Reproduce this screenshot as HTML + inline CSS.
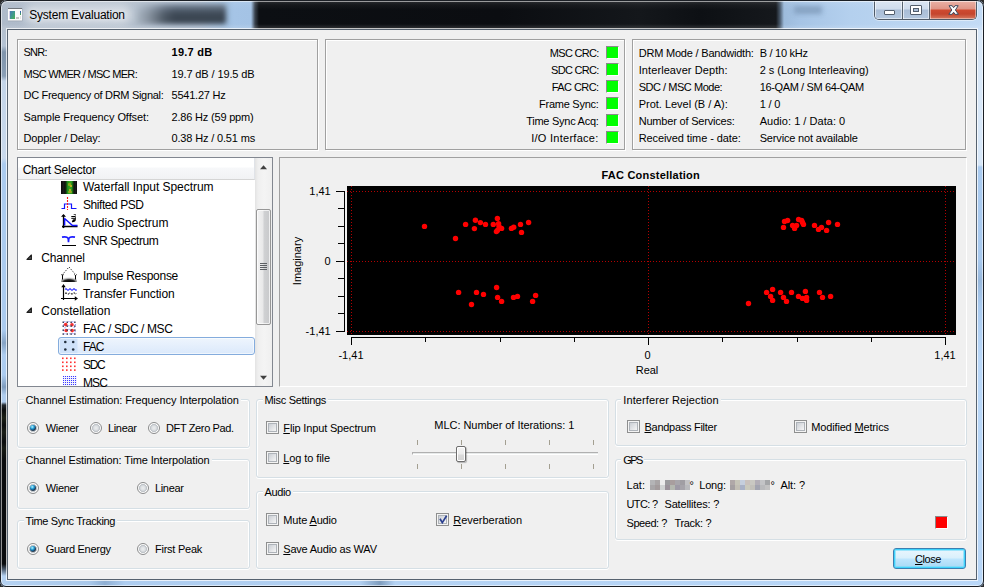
<!DOCTYPE html>
<html lang="en">
<head>
<meta charset="utf-8">
<title>System Evaluation</title>
<style>
html,body{margin:0;padding:0;background:#2a2a2a;}
body{width:984px;height:587px;overflow:hidden;font:11px/16px 'Liberation Sans',sans-serif;color:#000;}
#win{position:absolute;left:0;top:0;width:984px;height:587px;overflow:hidden;}
#win div,#win span,#win svg{position:absolute;box-sizing:border-box;}
.t{height:16px;line-height:16px;white-space:nowrap;font-family:'Liberation Sans',sans-serif;font-size:11px;}
.t u{text-decoration:underline;text-underline-offset:1px;}
.ttl{text-shadow:0 0 5px rgba(255,255,255,.7);}
.gt{background:#f0f0f0;padding:0 2px;margin-left:-2px;}
/* etched frame: grey rect + white rect offset by 1 */
.et{border:1px solid #a0a0a0;box-shadow:1px 1px 0 #fff, inset 1px 1px 0 #fff;}
/* vista group box */
.gb{border:1px solid #d5dfe5;border-radius:3px;box-shadow:inset 1px 1px 0 #fff,inset -1px 0 0 #fff,0 1px 0 #fff;}
.led{width:13px;height:13px;background:#00ff00;border:1px solid #8a8a8a;border-right-color:#fff;border-bottom-color:#fff;}
.cb{width:13px;height:13px;border:1px solid #8e8f8f;background:#f4f4f4;box-shadow:inset 0 0 0 1px #f4f4f4, inset 0 0 0 2px #aeb3b9;}
.cb i{position:absolute;left:2px;top:2px;width:7px;height:7px;background:linear-gradient(135deg,#cbcfd5,#f6f6f6);}
.rb{width:12px;height:12px;border-radius:50%;border:1px solid #8a8b8c;background:radial-gradient(circle at 50% 50%,#eceeef 0,#dde0e3 2.2px,#bcc1c6 3.700px,#fcfcfc 4.300px,#fcfcfc 6px);}
.rb.on::after{content:"";position:absolute;left:2px;top:2px;width:6px;height:6px;border-radius:50%;background:radial-gradient(circle at 38% 32%,#c9f3ff 0,#4fbfe6 1.200px,#1e86bd 2.200px,#155a8a 2.900px,#283f55 3.400px);}
</style>
</head>
<body>
<div id="win">
<!-- window frame (aero glass) -->
<div id="glass" style="left:0;top:0;width:984px;height:587px;border-radius:7px 7px 6px 6px;background:#b7d3f1;overflow:hidden;">
  <!-- title bar glass -->
  <div style="left:0;top:0;width:984px;height:30px;background:linear-gradient(90deg,#afbbca 0,#b2becc 140px,#adbed2 200px,#a0bfdf 228px,#a5c4e6 234px,#a4c3e5 251px,#39424d 255px,#0c0f13 259px,#0b0d11 500px,#14171b 640px,#0d1014 700px,#15181c 776px,#4a5a6c 780px,#9dbbdb 784px,#a6c4e5 800px,#b4d0ee 850px,#c3dbf5 984px);"></div>
  <!-- dark blurred blob behind title -->
  <div style="left:135px;top:4px;width:91px;height:20px;border-radius:2px;background:linear-gradient(90deg,rgba(195,207,220,.85) 0,rgba(195,207,220,.55) 14px,rgba(195,207,220,.12) 30px,rgba(195,207,220,0) 40px),linear-gradient(180deg,#718092 0,#5b6878 5px,#3e4956 9px,#38434f 20px);filter:blur(2.5px);"></div>
  <!-- text glow -->
  <div style="left:24px;top:5px;width:108px;height:19px;border-radius:9px;background:rgba(255,255,255,.5);filter:blur(5px);"></div>
  <!-- vertical softening on title -->
  <div style="left:0;top:0;width:984px;height:30px;background:linear-gradient(180deg,rgba(255,255,255,0) 0,rgba(255,255,255,.10) 2px,rgba(255,255,255,.04) 5px,rgba(255,255,255,0) 10px,rgba(255,255,255,0) 24px,rgba(255,255,255,.10) 27px,rgba(255,255,255,.12) 28px);"></div>
  <!-- blurred smudge right -->
  <div style="left:794px;top:6px;width:28px;height:8px;background:#809cbc;filter:blur(2.5px);opacity:.85;"></div>
  <!-- left frame -->
  <div style="left:0;top:30px;width:8px;height:557px;background:linear-gradient(180deg,#b4c0ce 0,#b4c3d4 16px,#7f94ab 22px,#8a9fb6 46px,#c3d4e8 51px,#c9d9ec 128px,#abcbef 134px,#abcbef 300px,#86a3c4 313px,#aecdf0 325px,#abcbef 345px,#7f9cbd 357px,#b0cdee 365px,#b0cdee 372px,#23292f 375px,#0a0c0e 380px,#1b2016 388px,#0c0e0f 395px,#191d16 402px,#0a0c0e 412px,#161a14 418px,#0a0c0e 430px,#0a0c0e 534px,#56677b 540px,#b5d2f2 546px);"></div>
  <!-- right frame -->
  <div style="left:976px;top:30px;width:8px;height:557px;background:linear-gradient(180deg,#d9e8f8 0,#d7e7f8 135px,#aacbf0 137px,#a8c9ee 230px,#98b8dc 250px,#a9caef 275px,#b9d7f8 330px,#b7d5f6 557px);"></div>
  <!-- bottom frame -->
  <div style="left:0;top:579px;width:984px;height:8px;background:linear-gradient(90deg,#b5d2f2 0,#a9c8ea 90px,#8fafd3 105px,#aecdf0 125px,#b2d0f1 360px,#7f9dbe 380px,#b4d2f3 395px,#b9d7f8 984px);"></div>
</div>
<!-- client border + client -->
<div style="left:6px;top:28px;width:972px;height:553px;border:1px solid rgba(255,255,255,.72);"></div>
<div style="left:7px;top:29px;width:970px;height:551px;border:1px solid #56626f;background:#f0f0f0;"></div>

<!-- window icon -->
<svg style="left:8px;top:8px" width="15" height="14" viewBox="0 0 15 14">
  <defs><linearGradient id="icg" x1="0" y1="0" x2="1" y2="1"><stop offset="0" stop-color="#4a79b4"/><stop offset=".5" stop-color="#3f9a8c"/><stop offset="1" stop-color="#4caf50"/></linearGradient>
  <linearGradient id="icb" x1="0" y1="0" x2="0" y2="1"><stop offset="0" stop-color="#2f55c0"/><stop offset="1" stop-color="#4caf50"/></linearGradient></defs>
  <rect x="0" y="0" width="14.500" height="13.300" fill="#8d949c" opacity=".55"/>
  <rect x="0" y="0" width="14" height="1" fill="#70757b"/>
  <rect x="0" y="1" width="14" height="11.500" fill="#fbfbfb"/>
  <rect x="2" y="3" width="5" height="8" fill="url(#icg)"/>
  <rect x="1.500" y="3" width=".6" height="8" fill="#7a6fc0" opacity=".6"/>
  <rect x="8" y="9" width="3" height="2" fill="#c4c4c4"/>
  <rect x="12" y="3" width="1" height="4" fill="url(#icb)"/>
  <rect x="12" y="8" width="1" height="3" fill="#e4e4e4"/>
</svg>

<!-- caption buttons -->
<div style="left:874px;top:0;width:103px;height:20px;border:1px solid #4f5b69;border-top:none;border-radius:0 0 5px 5px;overflow:hidden;background:#c3d3e6;box-shadow:0 0 0 1px rgba(255,255,255,.45);">
  <div style="left:0;top:0;width:27px;height:19px;background:linear-gradient(180deg,#dde7f3 0,#cfdcec 9px,#a9bdd6 10px,#b4c8df 19px);box-shadow:inset 1px 0 0 rgba(255,255,255,.6),inset -1px -1px 0 rgba(255,255,255,.5);"></div>
  <div style="left:27px;top:0;width:1px;height:19px;background:#57636f;"></div>
  <div style="left:28px;top:0;width:26px;height:19px;background:linear-gradient(180deg,#dde7f3 0,#cfdcec 9px,#a9bdd6 10px,#b4c8df 19px);box-shadow:inset 1px 0 0 rgba(255,255,255,.6),inset -1px -1px 0 rgba(255,255,255,.5);"></div>
  <div style="left:54px;top:0;width:1px;height:19px;background:#57636f;"></div>
  <div style="left:55px;top:0;width:46px;height:19px;background:linear-gradient(180deg,#ebb5aa 0,#df9486 9px,#cf4a30 10px,#c5452d 14px,#d67a60 19px);box-shadow:inset 1px 0 0 rgba(255,255,255,.45),inset -1px -1px 0 rgba(255,255,255,.4);"></div>
</div>
<!-- min glyph -->
<div style="left:884px;top:10px;width:11px;height:5px;background:#fff;border:1px solid #535e6c;border-radius:1px;"></div>
<!-- max glyph -->
<div style="left:910px;top:5px;width:12px;height:10px;background:#fff;border:1px solid #535e6c;border-radius:1px;"></div>
<div style="left:913px;top:8px;width:6px;height:4px;background:#a9bdd6;border:1px solid #535e6c;"></div>
<!-- close glyph -->
<svg style="left:948px;top:5px" width="12" height="10" viewBox="0 0 12 10">
  <path d="M1 0.700H4.200L5.600 2.700 7 0.700H10.200L7.400 5 10.400 9.300H7.100L5.600 7.200 4.100 9.300H0.800L3.800 5z" fill="#fdfdfd" stroke="#3f4a5e" stroke-width="1" stroke-linejoin="round"/>
</svg>
<!-- outer border -->
<div style="left:0;top:0;width:984px;height:587px;border-radius:7px 7px 6px 6px;border:1px solid #1b1f25;box-shadow:inset 0 0 0 1px rgba(255,255,255,.55);"></div>
<!-- top info boxes -->
<div class="et" style="left:17px;top:39px;width:301px;height:111px;"></div>
<div class="et" style="left:325px;top:39px;width:300px;height:111px;"></div>
<div class="et" style="left:632px;top:39px;width:334px;height:111px;"></div>
<div class="led" style="left:606px;top:46px;"></div>
<div class="led" style="left:606px;top:63px;"></div>
<div class="led" style="left:606px;top:80px;"></div>
<div class="led" style="left:606px;top:97px;"></div>
<div class="led" style="left:606px;top:114px;"></div>
<div class="led" style="left:606px;top:131px;"></div>
<!-- tree view -->
<div style="left:17px;top:157px;width:256px;height:230px;border:1px solid #828790;background:#fff;overflow:hidden;">
  <!-- selection -->
  <div style="left:40px;top:179px;width:197px;height:18px;border:1px solid #84acdd;border-radius:3px;background:linear-gradient(90deg,#cfe2f9 0,#cfe2f9 18px,rgba(207,226,249,0) 19px),linear-gradient(180deg,#eef5fd 0,#dbe9fb 100%);box-shadow:inset 0 0 0 1px rgba(255,255,255,.55);"></div>
  <!-- icons are placed relative to the tree (origin 18,158) -->
  <!-- waterfall -->
  <div style="left:43px;top:23px;width:16px;height:13px;background:linear-gradient(90deg,#0a0a0a 0,#1c1c1c 2.500px,#101010 4px,#14380f 5px,#1f8a1c 6.500px,#35a51f 8.500px,#2a9a1e 10.500px,#14500f 12px,#101010 13px,#1a1a1a 14.500px,#0a0a0a 16px);"></div>
  <div style="left:50px;top:25px;width:3px;height:3px;background:#8ea81e;border-radius:1px;"></div>
  <div style="left:52px;top:27px;width:2px;height:2px;background:#b5b020;"></div>
  <div style="left:51px;top:31px;width:2px;height:2px;background:#a8ad20;"></div>
  <div style="left:50px;top:33px;width:4px;height:2px;background:#97a81f;border-radius:1px;"></div>
  <!-- shifted psd -->
  <svg style="left:43px;top:38px" width="16" height="16" viewBox="0 0 16 16"><path d="M0.500 12.500h3v-4.500h7v4.500h5" fill="none" stroke="#1414ff" stroke-width="1.200"/><path d="M6.500 1v13" stroke="#ff1818" stroke-width="1.100" stroke-dasharray="2 1"/></svg>
  <!-- audio spectrum -->
  <svg style="left:43px;top:56px" width="17" height="16" viewBox="0 0 17 16"><path d="M2.500 1v13M1 12.500h15.500" stroke="#000" stroke-width="1.300" fill="none"/><path d="M2.500 0L0 2.800h5zM2.500 14.200l-1.200-1h2.400z" fill="#000"/><path d="M3.600 4.300v7.200M3.300 4.300l8.200 7.200h5" stroke="#1414ff" stroke-width="1.500" fill="none"/><path d="M10.300 2.500h4M10.300 4.300h4" stroke="#000" stroke-width="1"/><path d="M14.800 0v5.500c0 1.800-1.200 2.800-3.400 2.800-.6 0-.6-.3-.4-.8l.6-1.500c.2-.5.500-.7 1.200-.7h1z" fill="#000"/><path d="M12 0.800l2.600-.8v1.200z" fill="#000"/></svg>
  <!-- snr spectrum -->
  <svg style="left:43px;top:74px" width="16" height="16" viewBox="0 0 16 16"><path d="M1 5.2c3-.6 5.2-.4 6 1 .4.8.4 2.6.5 4 .1-1.400.1-3.200.5-4 .8-1.400 3-1.600 6-1" stroke="#1c1cff" stroke-width="1.7" fill="none"/><path d="M1 13.500h14" stroke="#000" stroke-width="1"/></svg>
  <!-- impulse response -->
  <svg style="left:43px;top:108px" width="16" height="16" viewBox="0 0 16 16"><defs><radialGradient id="irg" cx="50%" cy="100%" r="75%"><stop offset="0" stop-color="#000"/><stop offset=".45" stop-color="#222"/><stop offset="1" stop-color="#fff" stop-opacity="0"/></radialGradient></defs><rect x="0" y="9" width="16" height="7" fill="url(#irg)"/><path d="M1.500 8.500L8 1l6.500 7.500" stroke="#000" stroke-width="1" stroke-dasharray="1 1.500" fill="none"/><path d="M1.500 9.500v4M14.500 9.500v4M0.500 8.500l1 1.200 1-1.200M13.500 8.500l1 1.200 1-1.200" stroke="#000" stroke-width="1" fill="none"/></svg>
  <!-- transfer function -->
  <svg style="left:43px;top:126px" width="17" height="17" viewBox="0 0 17 17"><path d="M2.500 2v14M0 14.500h15" stroke="#000" stroke-width="1.200" fill="none"/><path d="M2.500 0L0.300 3.200h4.400zM17 14.500l-3.200-2.200v4.400z" fill="#000"/><path d="M4 5.500q1-1.600 2 0t2 0 2 0 2 0 2 0 1.500 0" stroke="#1a1aff" stroke-width="1.100" fill="none"/><path d="M4 9.500q1-1.400 2 0t2 0 2 0 2 0 2 0 1.500 0" stroke="#000" stroke-width="1" stroke-dasharray="2.500 1" fill="none"/></svg>
  <!-- FAC / SDC / MSC -->
  <svg style="left:43px;top:161px" width="16" height="17" viewBox="0 0 16 17"><g fill="#9a9aff"><rect x="3.2" y="2.1" width="1.200" height="1.200"/><rect x="7.3" y="2.0" width="1.200" height="1.200"/><rect x="11.2" y="2.2" width="1.200" height="1.200"/><rect x="2.0" y="5.2" width="1.200" height="1.200"/><rect x="13.8" y="5.0" width="1.200" height="1.200"/><rect x="7.3" y="6.2" width="1.200" height="1.200"/><rect x="3.4" y="8.2" width="1.200" height="1.200"/><rect x="12.6" y="7.8" width="1.200" height="1.200"/><rect x="7.4" y="9.8" width="1.200" height="1.200"/><rect x="3.3" y="14.2" width="1.200" height="1.200"/><rect x="8.3" y="14.2" width="1.200" height="1.200"/><rect x="11.3" y="14.0" width="1.200" height="1.200"/><rect x="13.5" y="12.0" width="1.200" height="1.200"/><rect x="1.8" y="11.0" width="1.200" height="1.200"/></g><g fill="#f53030"><circle cx="4.700" cy="5.600" r="1.800"/><circle cx="11" cy="5.700" r="1.800"/><circle cx="5.200" cy="11.500" r="1.800"/><circle cx="11.200" cy="11.600" r="1.800"/></g><g fill="#3c3c58"><rect x="1.5" y="2.5" width="1.500" height="1.500"/><rect x="1.5" y="6.4" width="1.500" height="1.500"/><rect x="1.5" y="10.4" width="1.500" height="1.500"/><rect x="1.5" y="14.3" width="1.500" height="1.500"/><rect x="5.5" y="2.5" width="1.500" height="1.500"/><rect x="5.5" y="6.4" width="1.500" height="1.500"/><rect x="5.5" y="10.4" width="1.500" height="1.500"/><rect x="5.5" y="14.3" width="1.500" height="1.500"/><rect x="9.4" y="2.5" width="1.500" height="1.500"/><rect x="9.4" y="6.4" width="1.500" height="1.500"/><rect x="9.4" y="10.4" width="1.500" height="1.500"/><rect x="9.4" y="14.3" width="1.500" height="1.500"/><rect x="13.1" y="2.5" width="1.500" height="1.500"/><rect x="13.1" y="6.4" width="1.500" height="1.500"/><rect x="13.1" y="10.4" width="1.500" height="1.500"/><rect x="13.1" y="14.3" width="1.500" height="1.500"/></g></svg>
  <!-- FAC -->
  <svg style="left:43px;top:180px" width="16" height="16" viewBox="0 0 16 16"><g fill="#23303f"><circle cx="4.300" cy="4" r="1.300"/><circle cx="12.200" cy="4" r="1.300"/><circle cx="4.300" cy="11.500" r="1.300"/><circle cx="12.200" cy="11.500" r="1.300"/></g></svg>
  <!-- SDC -->
  <svg style="left:43px;top:198px" width="16" height="16" viewBox="0 0 16 16"><g fill="#ff3030"><rect x="1" y="1.500" width="1.600" height="1.600"/><rect x="5" y="1.500" width="1.600" height="1.600"/><rect x="9" y="1.500" width="1.600" height="1.600"/><rect x="13" y="1.500" width="1.600" height="1.600"/><rect x="1" y="5.500" width="1.600" height="1.600"/><rect x="5" y="5.500" width="1.600" height="1.600"/><rect x="9" y="5.500" width="1.600" height="1.600"/><rect x="13" y="5.500" width="1.600" height="1.600"/><rect x="1" y="9.500" width="1.600" height="1.600"/><rect x="5" y="9.500" width="1.600" height="1.600"/><rect x="9" y="9.500" width="1.600" height="1.600"/><rect x="13" y="9.500" width="1.600" height="1.600"/><rect x="1" y="13.300" width="1.600" height="1.600"/><rect x="5" y="13.300" width="1.600" height="1.600"/><rect x="9" y="13.300" width="1.600" height="1.600"/><rect x="13" y="13.300" width="1.600" height="1.600"/></g></svg>
  <!-- MSC -->
  <div style="left:45px;top:218px;width:14px;height:12px;background-color:#ededff;background-image:linear-gradient(180deg,transparent 1px,#f4f4ff 1px),linear-gradient(90deg,#3a3aff 1px,transparent 1px);background-size:2px 2px,2px 2px;"></div>
  <!-- group arrows -->
  <svg style="left:8px;top:96px" width="8" height="8" viewBox="0 0 8 8"><path d="M5.400 1v4.400H1z" fill="#595959" stroke="#1c1c1c" stroke-width="1.100" stroke-linejoin="round"/></svg>
  <svg style="left:8px;top:149px" width="8" height="8" viewBox="0 0 8 8"><path d="M5.400 1v4.400H1z" fill="#595959" stroke="#1c1c1c" stroke-width="1.100" stroke-linejoin="round"/></svg>
  <!-- header -->
  <div style="left:0;top:0;width:237px;height:22px;background:linear-gradient(180deg,#fff 0,#fff 9px,#f7f8fa 10px,#f1f2f4 21px);border-bottom:1px solid #d5d5d5;border-right:1px solid #e0e3e8;"></div>
  <!-- scrollbar -->
  <div style="left:237px;top:0;width:17px;height:228px;background:linear-gradient(90deg,#e3e3e3 0,#efefef 3px,#f4f4f4 9px,#efefef 17px);"></div>
  <svg style="left:242px;top:7px" width="7" height="5" viewBox="0 0 7 5"><path d="M3.500 0.300L7 4.300H0z" fill="#404040"/></svg>
  <svg style="left:242px;top:217px" width="7" height="5" viewBox="0 0 7 5"><path d="M3.500 4.700L7 0.700H0z" fill="#404040"/></svg>
  <div style="left:238px;top:51px;width:15px;height:116px;border:1px solid #979797;border-radius:2px;background:linear-gradient(90deg,#f3f3f3 0,#e8e8e9 6px,#d0d1d3 7px,#c5c6c8 15px);box-shadow:inset 0 0 0 1px rgba(255,255,255,.7);"></div>
  <div style="left:242px;top:105px;width:7px;height:1px;background:#5d6064;box-shadow:0 2px 0 #5d6064,0 4px 0 #5d6064,0 6px 0 #5d6064;"></div>
</div>
<!-- chart -->
<div style="left:279px;top:157px;width:688px;height:230px;border:1px solid #a0a0a0;border-right-color:#fff;border-bottom-color:#fff;"></div>
<svg style="left:330px;top:180px" width="640" height="170" viewBox="330 180 640 170" shape-rendering="crispEdges"><rect x="347" y="186" width="609" height="149" fill="#000"/><path d="M351.5 186V335" stroke="#b40000" stroke-width="1" stroke-dasharray="1 2"/><path d="M648.5 186V335" stroke="#b40000" stroke-width="1" stroke-dasharray="1 2"/><path d="M945.5 186V335" stroke="#b40000" stroke-width="1" stroke-dasharray="1 2"/><path d="M347 191.5H956" stroke="#b40000" stroke-width="1" stroke-dasharray="1 2"/><path d="M347 261.5H956" stroke="#b40000" stroke-width="1" stroke-dasharray="1 2"/><path d="M347 331.5H956" stroke="#b40000" stroke-width="1" stroke-dasharray="1 2"/><path d="M344.5 191V332M336 191.5H345M338 208.5H345M338 226.5H345M338 243.5H345M336 261.5H345M338 278.5H345M338 296.5H345M338 313.5H345M336 331.5H345" stroke="#000" stroke-width="1" fill="none"/><path d="M351 337.5H946M351.5 337V345M425.5 337V342M500.5 337V342M574.5 337V342M648.5 337V345M722.5 337V342M797.5 337V342M871.5 337V342M945.5 337V345" stroke="#000" stroke-width="1" fill="none"/><g fill="#ff0000" shape-rendering="auto"><circle cx="424.5" cy="226.4" r="2.7"/><circle cx="455.5" cy="238.5" r="2.7"/><circle cx="465.6" cy="224.4" r="2.7"/><circle cx="475.4" cy="220.3" r="2.7"/><circle cx="474.4" cy="228.6" r="2.7"/><circle cx="480.4" cy="222.6" r="2.7"/><circle cx="485.5" cy="224.4" r="2.7"/><circle cx="493.3" cy="224.4" r="2.7"/><circle cx="497.4" cy="218.5" r="2.7"/><circle cx="498.6" cy="223.6" r="2.7"/><circle cx="499.0" cy="226.4" r="2.7"/><circle cx="501.6" cy="228.4" r="2.7"/><circle cx="496.4" cy="231.6" r="2.7"/><circle cx="497.4" cy="230.4" r="2.7"/><circle cx="511.4" cy="228.4" r="2.7"/><circle cx="513.7" cy="227.3" r="2.7"/><circle cx="520.5" cy="224.4" r="2.7"/><circle cx="521.5" cy="232.4" r="2.7"/><circle cx="528.6" cy="222.5" r="2.7"/><circle cx="458.6" cy="292.4" r="2.7"/><circle cx="471.5" cy="304.5" r="2.7"/><circle cx="476.5" cy="292.4" r="2.7"/><circle cx="483.5" cy="294.4" r="2.7"/><circle cx="496.6" cy="287.5" r="2.7"/><circle cx="497.6" cy="297.4" r="2.7"/><circle cx="501.6" cy="301.4" r="2.7"/><circle cx="513.5" cy="297.4" r="2.7"/><circle cx="517.5" cy="296.4" r="2.7"/><circle cx="532.6" cy="301.4" r="2.7"/><circle cx="535.6" cy="295.4" r="2.7"/><circle cx="783.5" cy="227.4" r="2.7"/><circle cx="784.5" cy="221.5" r="2.7"/><circle cx="787.6" cy="220.5" r="2.7"/><circle cx="792.6" cy="225.4" r="2.7"/><circle cx="794.6" cy="228.4" r="2.7"/><circle cx="796.6" cy="225.4" r="2.7"/><circle cx="798.6" cy="219.5" r="2.7"/><circle cx="801.6" cy="220.5" r="2.7"/><circle cx="802.5" cy="222.5" r="2.7"/><circle cx="803.5" cy="224.4" r="2.7"/><circle cx="814.5" cy="225.4" r="2.7"/><circle cx="818.5" cy="229.4" r="2.7"/><circle cx="821.5" cy="227.4" r="2.7"/><circle cx="826.6" cy="230.4" r="2.7"/><circle cx="828.6" cy="222.5" r="2.7"/><circle cx="837.5" cy="224.4" r="2.7"/><circle cx="748.5" cy="303.5" r="2.7"/><circle cx="766.6" cy="292.4" r="2.7"/><circle cx="772.6" cy="289.4" r="2.7"/><circle cx="770.6" cy="296.4" r="2.7"/><circle cx="772.6" cy="300.4" r="2.7"/><circle cx="780.6" cy="292.4" r="2.7"/><circle cx="783.5" cy="297.4" r="2.7"/><circle cx="786.5" cy="301.4" r="2.7"/><circle cx="791.5" cy="292.4" r="2.7"/><circle cx="798.5" cy="296.4" r="2.7"/><circle cx="802.5" cy="298.4" r="2.7"/><circle cx="805.4" cy="291.4" r="2.7"/><circle cx="806.6" cy="297.4" r="2.7"/><circle cx="806.6" cy="300.4" r="2.7"/><circle cx="819.5" cy="292.4" r="2.7"/><circle cx="822.5" cy="297.4" r="2.7"/><circle cx="830.6" cy="296.4" r="2.7"/></g></svg>
<div class="t" style="left:272px;top:253px;width:50px;text-align:center;transform:rotate(-90deg);">Imaginary</div>
<!-- bottom group boxes -->
<div class="gb" style="left:17px;top:399px;width:233px;height:49px;"></div>
<div class="gb" style="left:17px;top:459px;width:233px;height:50px;"></div>
<div class="gb" style="left:17px;top:520px;width:233px;height:49px;"></div>
<div class="gb" style="left:256px;top:399px;width:353px;height:79px;"></div>
<div class="gb" style="left:256px;top:491px;width:353px;height:78px;"></div>
<div class="gb" style="left:615px;top:399px;width:352px;height:47px;"></div>
<div class="gb" style="left:615px;top:459px;width:352px;height:81px;"></div>
<!-- radios -->
<div class="rb on" style="left:27px;top:422px;"></div>
<div class="rb" style="left:90px;top:422px;"></div>
<div class="rb" style="left:148px;top:422px;"></div>
<div class="rb on" style="left:27px;top:482px;"></div>
<div class="rb" style="left:137px;top:482px;"></div>
<div class="rb on" style="left:27px;top:543px;"></div>
<div class="rb" style="left:137px;top:543px;"></div>
<!-- checkboxes -->
<div class="cb" style="left:266px;top:421px;"><i></i></div>
<div class="cb" style="left:266px;top:451px;"><i></i></div>
<div class="cb" style="left:266px;top:513px;"><i></i></div>
<div class="cb" style="left:266px;top:542px;"><i></i></div>
<div class="cb" style="left:436px;top:513px;"><i></i><svg style="left:2px;top:1px" width="9" height="9" viewBox="0 0 9 9"><path d="M1 3.800L3.300 7.600 7.600 0.800" fill="none" stroke="#2a3f8f" stroke-width="1.700"/></svg></div>
<div class="cb" style="left:627px;top:420px;"><i></i></div>
<div class="cb" style="left:794px;top:420px;"><i></i></div>
<!-- slider -->
<div style="left:412px;top:452px;width:186px;height:3px;background:#e7eaea;border-top:1px solid #b0b0b0;border-left:1px solid #b0b0b0;border-bottom:1px solid #fff;"></div>
<div style="left:417px;top:440px;width:1px;height:5px;background:#a39f91;box-shadow:44px 0 0 #a39f91,88px 0 0 #a39f91,132px 0 0 #a39f91,176px 0 0 #a39f91,0 24px 0 #a39f91,44px 24px 0 #a39f91,88px 24px 0 #a39f91,132px 24px 0 #a39f91,176px 24px 0 #a39f91;"></div>
<div style="left:456px;top:446px;width:10px;height:16px;border:1px solid #6d6d6d;border-radius:2px;background:linear-gradient(180deg,#f4f4f4 0,#ececec 7px,#dadada 8px,#d2d2d2 14px);box-shadow:inset 0 0 0 1px #fff,1px 1px 1px rgba(0,0,0,.25);"></div>
<!-- GPS blurred values -->
<svg style="left:650px;top:480px" width="40" height="10" viewBox="0 0 40 10" shape-rendering="crispEdges"><rect x="0" y="0" width="5" height="5" fill="#b4b4b6"/><rect x="5" y="0" width="5" height="5" fill="#a9a5a6"/><rect x="10" y="0" width="5" height="5" fill="#ececec"/><rect x="15" y="0" width="5" height="5" fill="#9b9b9e"/><rect x="20" y="0" width="5" height="5" fill="#a89e9e"/><rect x="25" y="0" width="5" height="5" fill="#a8a6ab"/><rect x="30" y="0" width="5" height="5" fill="#a09ea3"/><rect x="35" y="0" width="5" height="5" fill="#c2c2c4"/><rect x="0" y="5" width="5" height="5" fill="#a8a6a8"/><rect x="5" y="5" width="5" height="5" fill="#a39b9c"/><rect x="10" y="5" width="5" height="5" fill="#d0d3d3"/><rect x="15" y="5" width="5" height="5" fill="#9a929a"/><rect x="20" y="5" width="5" height="5" fill="#b4b8b0"/><rect x="25" y="5" width="5" height="5" fill="#9e9aa6"/><rect x="30" y="5" width="5" height="5" fill="#a6a4aa"/><rect x="35" y="5" width="5" height="5" fill="#b9babd"/></svg>
<svg style="left:730px;top:480px" width="40" height="10" viewBox="0 0 40 10" shape-rendering="crispEdges"><rect x="0" y="0" width="5" height="5" fill="#b0a8a8"/><rect x="5" y="0" width="5" height="5" fill="#c6c4b8"/><rect x="10" y="0" width="5" height="5" fill="#c5cedd"/><rect x="15" y="0" width="5" height="5" fill="#c9c1bd"/><rect x="20" y="0" width="5" height="5" fill="#c9c8c2"/><rect x="25" y="0" width="5" height="5" fill="#b2aeb6"/><rect x="30" y="0" width="5" height="5" fill="#c3c4c6"/><rect x="35" y="0" width="5" height="5" fill="#a4a6a8"/><rect x="0" y="5" width="5" height="5" fill="#a5a0a2"/><rect x="5" y="5" width="5" height="5" fill="#c2beb4"/><rect x="10" y="5" width="5" height="5" fill="#a9b1c6"/><rect x="15" y="5" width="5" height="5" fill="#cac9bd"/><rect x="20" y="5" width="5" height="5" fill="#c2c0ba"/><rect x="25" y="5" width="5" height="5" fill="#a2a4b0"/><rect x="30" y="5" width="5" height="5" fill="#b9babc"/><rect x="35" y="5" width="5" height="5" fill="#c2c2c2"/></svg>
<!-- red LED -->
<div class="led" style="left:935px;top:516px;background:#ff0000;"></div>
<!-- Close button -->
<div style="left:893px;top:548px;width:73px;height:21px;border:1px solid #3c7fb1;border-radius:3px;background:linear-gradient(180deg,#eaf6fd 0,#d9f0fc 9px,#bee6fd 10px,#a7d9f5 19px);box-shadow:inset 0 0 0 1px #3fd3fb, inset 0 0 0 2px rgba(110,218,250,.6);"></div>

<!-- text -->
<div class="t" style="left:23.50px;top:44px;letter-spacing:-0.745px;">SNR:</div>
<div class="t" style="left:171.50px;top:44px;font-weight:bold;letter-spacing:0.266px;">19.7 dB</div>
<div class="t" style="left:23.50px;top:66px;letter-spacing:-0.684px;">MSC WMER / MSC MER:</div>
<div class="t" style="left:171.50px;top:66px;letter-spacing:-0.119px;">19.7 dB / 19.5 dB</div>
<div class="t" style="left:23.50px;top:87px;letter-spacing:-0.295px;">DC Frequency of DRM Signal:</div>
<div class="t" style="left:171.50px;top:87px;letter-spacing:-0.227px;">5541.27 Hz</div>
<div class="t" style="left:23.50px;top:109px;letter-spacing:-0.087px;">Sample Frequency Offset:</div>
<div class="t" style="left:171.50px;top:109px;letter-spacing:-0.187px;">2.86 Hz (59 ppm)</div>
<div class="t" style="left:23.50px;top:130px;letter-spacing:-0.117px;">Doppler / Delay:</div>
<div class="t" style="left:171.50px;top:130px;letter-spacing:-0.160px;">0.38 Hz / 0.51 ms</div>
<div class="t" style="left:549.80px;top:45px;letter-spacing:-0.699px;">MSC CRC:</div>
<div class="t" style="left:551.00px;top:62px;letter-spacing:-0.696px;">SDC CRC:</div>
<div class="t" style="left:551.80px;top:79px;letter-spacing:-0.568px;">FAC CRC:</div>
<div class="t" style="left:539.00px;top:96px;letter-spacing:-0.251px;">Frame Sync:</div>
<div class="t" style="left:526.20px;top:113px;letter-spacing:-0.258px;">Time Sync Acq:</div>
<div class="t" style="left:531.20px;top:130px;letter-spacing:0.272px;">I/O Interface:</div>
<div class="t" style="left:638.70px;top:45px;letter-spacing:-0.201px;">DRM Mode / Bandwidth:</div>
<div class="t" style="left:759.70px;top:45px;letter-spacing:-0.275px;">B / 10 kHz</div>
<div class="t" style="left:638.70px;top:62px;letter-spacing:0.087px;">Interleaver Depth:</div>
<div class="t" style="left:759.70px;top:62px;letter-spacing:-0.020px;">2 s (Long Interleaving)</div>
<div class="t" style="left:638.70px;top:79px;letter-spacing:-0.465px;">SDC / MSC Mode:</div>
<div class="t" style="left:759.70px;top:79px;letter-spacing:-0.369px;">16-QAM / SM 64-QAM</div>
<div class="t" style="left:638.70px;top:96px;letter-spacing:-0.013px;">Prot. Level (B / A):</div>
<div class="t" style="left:759.70px;top:96px;letter-spacing:-0.181px;">1 / 0</div>
<div class="t" style="left:638.70px;top:113px;letter-spacing:-0.192px;">Number of Services:</div>
<div class="t" style="left:759.70px;top:113px;letter-spacing:0.028px;">Audio: 1 / Data: 0</div>
<div class="t" style="left:638.70px;top:130px;letter-spacing:-0.092px;">Received time - date:</div>
<div class="t" style="left:759.70px;top:130px;letter-spacing:-0.167px;">Service not available</div>
<div class="t ttl" style="left:29.30px;top:7px;font-size:12px;letter-spacing:-0.229px;">System Evaluation</div>
<div class="t" style="left:22.70px;top:162px;font-size:12px;letter-spacing:-0.265px;">Chart Selector</div>
<div class="t tr" style="left:83.00px;top:179px;font-size:12px;letter-spacing:-0.046px;">Waterfall Input Spectrum</div>
<div class="t tr" style="left:83.00px;top:197px;font-size:12px;letter-spacing:-0.443px;">Shifted PSD</div>
<div class="t tr" style="left:83.00px;top:215px;font-size:12px;letter-spacing:0.008px;">Audio Spectrum</div>
<div class="t tr" style="left:83.00px;top:233px;font-size:12px;letter-spacing:-0.378px;">SNR Spectrum</div>
<div class="t tr" style="left:41.30px;top:250px;font-size:12px;letter-spacing:-0.172px;">Channel</div>
<div class="t tr" style="left:83.00px;top:268px;font-size:12px;letter-spacing:-0.274px;">Impulse Response</div>
<div class="t tr" style="left:83.00px;top:286px;font-size:12px;letter-spacing:-0.123px;">Transfer Function</div>
<div class="t tr" style="left:41.30px;top:303px;font-size:12px;letter-spacing:-0.029px;">Constellation</div>
<div class="t tr" style="left:83.00px;top:321px;font-size:12px;letter-spacing:-0.390px;">FAC / SDC / MSC</div>
<div class="t tr" style="left:83.00px;top:339px;font-size:12px;letter-spacing:-0.948px;">FAC</div>
<div class="t tr" style="left:83.00px;top:357px;font-size:12px;letter-spacing:-1.281px;">SDC</div>
<div class="t tr" style="left:83.00px;top:375px;font-size:12px;letter-spacing:-0.891px;">MSC</div>
<div class="t" style="left:601.50px;top:167px;font-weight:bold;letter-spacing:0.222px;">FAC Constellation</div>
<div class="t" style="left:309.28px;top:183px;">1,41</div>
<div class="t" style="left:324.57px;top:253px;">0</div>
<div class="t" style="left:305.62px;top:323px;">-1,41</div>
<div class="t" style="left:338.46px;top:347px;">-1,41</div>
<div class="t" style="left:644.44px;top:347px;">0</div>
<div class="t" style="left:934.29px;top:347px;">1,41</div>
<div class="t" style="left:635.69px;top:362px;">Real</div>
<div class="t gt" style="left:25.50px;top:392px;letter-spacing:-0.088px;">Channel Estimation: Frequency Interpolation</div>
<div class="t gt" style="left:25.50px;top:452px;letter-spacing:-0.130px;">Channel Estimation: Time Interpolation</div>
<div class="t gt" style="left:25.50px;top:513px;letter-spacing:-0.372px;">Time Sync Tracking</div>
<div class="t" style="left:45.70px;top:420px;letter-spacing:-0.307px;">Wiener</div>
<div class="t" style="left:108.00px;top:420px;letter-spacing:-0.346px;">Linear</div>
<div class="t" style="left:166.00px;top:420px;letter-spacing:-0.373px;">DFT Zero Pad.</div>
<div class="t" style="left:45.70px;top:480px;letter-spacing:-0.307px;">Wiener</div>
<div class="t" style="left:155.00px;top:480px;letter-spacing:-0.346px;">Linear</div>
<div class="t" style="left:45.70px;top:541px;letter-spacing:-0.290px;">Guard Energy</div>
<div class="t" style="left:155.00px;top:541px;letter-spacing:-0.252px;">First Peak</div>
<div class="t gt" style="left:264.50px;top:392px;letter-spacing:-0.302px;">Misc Settings</div>
<div class="t" style="left:283.30px;top:420px;letter-spacing:-0.152px;"><u>F</u>lip Input Spectrum</div>
<div class="t" style="left:283.30px;top:450px;letter-spacing:-0.093px;"><u>L</u>og to file</div>
<div class="t" style="left:434.30px;top:417px;letter-spacing:-0.044px;">MLC: Number of Iterations: 1</div>
<div class="t gt" style="left:264.50px;top:484px;letter-spacing:-0.368px;">Audio</div>
<div class="t" style="left:283.30px;top:512px;letter-spacing:-0.155px;">Mute <u>A</u>udio</div>
<div class="t" style="left:453.30px;top:512px;letter-spacing:-0.031px;"><u>R</u>everberation</div>
<div class="t" style="left:283.30px;top:541px;letter-spacing:-0.220px;"><u>S</u>ave Audio as WAV</div>
<div class="t gt" style="left:623.30px;top:392px;letter-spacing:0.098px;">Interferer Rejection</div>
<div class="t" style="left:644.50px;top:419px;letter-spacing:-0.276px;"><u>B</u>andpass Filter</div>
<div class="t" style="left:811.30px;top:419px;letter-spacing:-0.162px;">Modified <u>M</u>etrics</div>
<div class="t gt" style="left:623.30px;top:452px;letter-spacing:-1.578px;">GPS</div>
<div class="t" style="left:626.50px;top:477px;letter-spacing:0.035px;">Lat:</div>
<div class="t" style="left:689.50px;top:477px;">°</div>
<div class="t" style="left:699.30px;top:477px;letter-spacing:-0.206px;">Long:</div>
<div class="t" style="left:770.50px;top:477px;">°</div>
<div class="t" style="left:780.50px;top:477px;letter-spacing:-0.096px;">Alt: ?</div>
<div class="t" style="left:626.50px;top:496px;letter-spacing:-0.641px;">UTC: ?</div>
<div class="t" style="left:664.50px;top:496px;letter-spacing:-0.167px;">Satellites: ?</div>
<div class="t" style="left:626.50px;top:515px;letter-spacing:-0.443px;">Speed: ?</div>
<div class="t" style="left:674.50px;top:515px;letter-spacing:-0.329px;">Track: ?</div>
<div class="t" style="left:915.00px;top:551px;letter-spacing:-0.428px;"><u>C</u>lose</div>
</div>
</body>
</html>
